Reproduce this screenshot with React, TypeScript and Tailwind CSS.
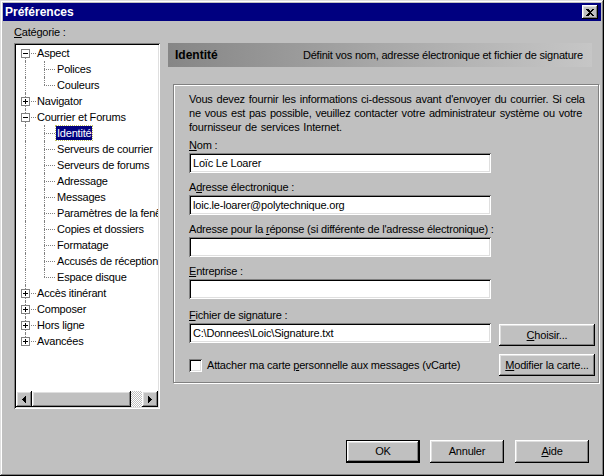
import React from "react";

// biseaux façon Windows 95
const raised =
  "shadow-[inset_-1px_-1px_0_#000,inset_1px_1px_0_#fff,inset_-2px_-2px_0_#808080,inset_2px_2px_0_#dfdfdf]";
const sunken =
  "shadow-[inset_1px_1px_0_#808080,inset_-1px_-1px_0_#fff,inset_2px_2px_0_#000,inset_-2px_-2px_0_#dfdfdf]";

type Node = {
  label: string;
  level: 0 | 1;
  exp?: "+" | "-";
  first?: boolean;
  lastRoot?: boolean;
  lastChild?: boolean;
  selected?: boolean;
};

const tree: Node[] = [
  { label: "Aspect", level: 0, exp: "-", first: true },
  { label: "Polices", level: 1 },
  { label: "Couleurs", level: 1, lastChild: true },
  { label: "Navigator", level: 0, exp: "+" },
  { label: "Courrier et Forums", level: 0, exp: "-" },
  { label: "Identité", level: 1, selected: true },
  { label: "Serveurs de courrier", level: 1 },
  { label: "Serveurs de forums", level: 1 },
  { label: "Adressage", level: 1 },
  { label: "Messages", level: 1 },
  { label: "Paramètres de la fenêtre", level: 1 },
  { label: "Copies et dossiers", level: 1 },
  { label: "Formatage", level: 1 },
  { label: "Accusés de réception", level: 1 },
  { label: "Espace disque", level: 1, lastChild: true },
  { label: "Accès itinérant", level: 0, exp: "+" },
  { label: "Composer", level: 0, exp: "+" },
  { label: "Hors ligne", level: 0, exp: "+" },
  { label: "Avancées", level: 0, exp: "+", lastRoot: true },
];

function Expander({ sign }: { sign: "+" | "-" }) {
  return (
    <span className="absolute left-[5px] top-[4px] w-[9px] h-[9px] bg-white border border-[#808080]">
      <span className="absolute left-[1px] top-[3px] w-[5px] h-px bg-black" />
      {sign === "+" && <span className="absolute left-[3px] top-[1px] w-px h-[5px] bg-black" />}
    </span>
  );
}

function TreeRow({ n }: { n: Node }) {
  return (
    <div className="relative h-4 leading-4 whitespace-nowrap">
      {/* ligne verticale de la racine */}
      {n.first ? (
        <span className="absolute left-[9px] top-[8px] bottom-0 border-l border-dotted border-[#808080]" />
      ) : n.lastRoot ? (
        <span className="absolute left-[9px] top-0 h-[8px] border-l border-dotted border-[#808080]" />
      ) : (
        <span className="absolute left-[9px] top-0 bottom-0 border-l border-dotted border-[#808080]" />
      )}
      {n.level === 0 ? (
        <>
          <span className="absolute left-[9px] top-[8px] w-[11px] border-t border-dotted border-[#808080]" />
          {n.exp && <Expander sign={n.exp} />}
          <span className="pl-[21px]">{n.label}</span>
        </>
      ) : (
        <>
          {n.lastChild ? (
            <span className="absolute left-[28px] top-0 h-[8px] border-l border-dotted border-[#808080]" />
          ) : (
            <span className="absolute left-[28px] top-0 bottom-0 border-l border-dotted border-[#808080]" />
          )}
          <span className="absolute left-[28px] top-[8px] w-[11px] border-t border-dotted border-[#808080]" />
          <span className="pl-[40px]">
            {n.selected ? (
              <span className="px-px py-px bg-[#000080] text-white outline outline-1 outline-dotted outline-[#c0c060]">
                {n.label}
              </span>
            ) : (
              <span className="px-px">{n.label}</span>
            )}
          </span>
        </>
      )}
    </div>
  );
}

function Arrow({ dir }: { dir: "left" | "right" }) {
  return (
    <div className={`w-4 h-4 bg-[#c0c0c0] flex items-center justify-center ${raised}`}>
      <svg width="4" height="7" viewBox="0 0 4 7" shapeRendering="crispEdges">
        {dir === "left" ? (
          <path d="M4 0v7L0 3.5z" fill="#000" />
        ) : (
          <path d="M0 0v7l4-3.5z" fill="#000" />
        )}
      </svg>
    </div>
  );
}

function Field({ label, value, mt = "mt-[7px]" }: { label: React.ReactNode; value?: string; mt?: string }) {
  return (
    <div className={mt}>
      <div className="h-[14px] leading-[14px]">{label}</div>
      <div className={`mt-px w-[302px] h-[20px] bg-white pl-[4px] leading-[20px] ${sunken}`}>{value}</div>
    </div>
  );
}

function Btn({ children, def = false, w = "w-[74px]" }: { children: React.ReactNode; def?: boolean; w?: string }) {
  if (def) {
    return (
      <div className={`${w} h-[23px] border border-black`}>
        <div className={`h-full flex items-center justify-center bg-[#c0c0c0] ${raised}`}>{children}</div>
      </div>
    );
  }
  return <div className={`${w} h-[23px] flex items-center justify-center bg-[#c0c0c0] ${raised}`}>{children}</div>;
}

export default function App() {
  return (
    <div className="w-[604px] h-[476px] bg-[#c0c0c0] p-[3px] text-[11px] tracking-[-0.2px] text-black font-['Liberation_Sans',Arial,sans-serif] shadow-[inset_-1px_-1px_0_#000,inset_1px_1px_0_#dfdfdf,inset_-2px_-2px_0_#808080,inset_2px_2px_0_#fff] overflow-hidden">
      {/* Barre de titre */}
      <div className="h-[18px] bg-[#000080] flex items-center justify-between pl-[2px] pr-[3px]">
        <span className="text-white font-bold text-[12px] leading-none tracking-normal">Préférences</span>
        <div className={`w-4 h-[14px] bg-[#c0c0c0] flex items-center justify-center ${raised}`}>
          <svg width="8" height="7" viewBox="0 0 8 7" shapeRendering="crispEdges">
            <path d="M0 0h2l2 2 2-2h2L5 3.5 8 7H6L4 5 2 7H0l3-3.5z" fill="#000" />
          </svg>
        </div>
      </div>

      <div className="flex">
        {/* Colonne gauche : catégories */}
        <div className="ml-[11px] w-[146px]">
          <div className="h-[22px] pt-[5px] leading-[13px]">
            <span className="underline">C</span>atégorie :
          </div>
          <div className={`h-[366px] bg-white p-[2px] flex flex-col ${sunken}`}>
            <div className="flex-1 overflow-hidden">
              {tree.map((n) => (
                <TreeRow key={n.label} n={n} />
              ))}
            </div>
            <div className="h-4 flex">
              <Arrow dir="left" />
              <div className={`w-[99px] h-4 bg-[#c0c0c0] ${raised}`} />
              <div className="flex-1 h-4 bg-[repeating-conic-gradient(#c0c0c0_0_25%,#fff_0_50%)] bg-[length:2px_2px]" />
              <Arrow dir="right" />
            </div>
          </div>
        </div>

        {/* Colonne droite */}
        <div className="ml-[8px] pt-[22px]">
          <div className="w-[424px] h-[24px] flex items-center justify-between pl-[7px] pr-[9px] bg-gradient-to-r from-[#868686] via-[#a8a8a8] to-[#c6c6c6]">
            <span className="font-bold text-[12px] tracking-normal">Identité</span>
            <span>Définit vos nom, adresse électronique et fichier de signature</span>
          </div>

          <div className="ml-[5px] mt-[17px] w-[426px] h-[299px] border border-[#808080] shadow-[1px_1px_0_#fff,inset_1px_1px_0_#fff] pl-[15px] pt-[7px]">
            <p className="leading-[14px] whitespace-nowrap [word-spacing:1px]">
              Vous devez fournir les informations ci-dessous avant d'envoyer du courrier. Si cela
              <br />
              ne vous est pas possible, veuillez contacter votre administrateur système ou votre
              <br />
              fournisseur de services Internet.
            </p>

            <Field
              mt="mt-[4px]"
              label={
                <>
                  <span className="underline">N</span>om :
                </>
              }
              value="Loïc Le Loarer"
            />
            <Field
              label={
                <>
                  A<span className="underline">d</span>resse électronique :
                </>
              }
              value="loic.le-loarer@polytechnique.org"
            />
            <Field
              label={
                <>
                  Adresse pour la <span className="underline">r</span>éponse (si différente de l'adresse électronique) :
                </>
              }
            />
            <Field
              label={
                <>
                  <span className="underline">E</span>ntreprise :
                </>
              }
            />

            <div className="mt-[9px] h-[14px] leading-[14px]">
              <span className="underline">F</span>ichier de signature :
            </div>
            <div className="mt-px flex">
              <div className={`w-[302px] h-[20px] bg-white pl-[4px] leading-[20px] ${sunken}`}>
                C:\Donnees\Loic\Signature.txt
              </div>
              <div className={`ml-[8px] mt-px w-[96px] h-[22px] flex items-center justify-center bg-[#c0c0c0] ${raised}`}>
                <span>
                  <span className="underline">C</span>hoisir...
                </span>
              </div>
            </div>
            <div className="mt-[8px] flex">
              <div className="w-[302px] h-[22px] flex items-center">
                <div className={`w-[13px] h-[13px] bg-white ${sunken}`} />
                <span className="ml-[5px]">
                  Attacher ma carte <span className="underline">p</span>ersonnelle aux messages (vCarte)
                </span>
              </div>
              <div className={`ml-[8px] w-[96px] h-[22px] flex items-center justify-center bg-[#c0c0c0] ${raised}`}>
                <span>
                  <span className="underline">M</span>odifier la carte...
                </span>
              </div>
            </div>
          </div>
        </div>
      </div>

      {/* Boutons du bas */}
      <div className="mt-[31px] mr-[12px] flex justify-end">
        <Btn def>OK</Btn>
        <div className="ml-[10px]">
          <Btn>Annuler</Btn>
        </div>
        <div className="ml-[11px]">
          <Btn>
            <span>
              <span className="underline">A</span>ide
            </span>
          </Btn>
        </div>
      </div>
    </div>
  );
}
